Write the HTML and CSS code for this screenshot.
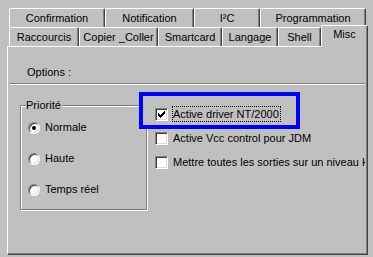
FILE: index.html
```html
<!DOCTYPE html>
<html>
<head>
<title>Options - Misc</title>
<link rel="stylesheet" href="styles.css">
</head>
<body>

  <div class="dialog">
    <div class="tab-row">
      <div class="tab tab-confirmation">Confirmation</div>
      <div class="tab tab-notification">Notification</div>
      <div class="tab tab-i2c">I²C</div>
      <div class="tab tab-programmation">Programmation</div>
    </div>
    <div class="tab-row">
      <div class="tab tab-raccourcis">Raccourcis</div>
      <div class="tab tab-copier">Copier _Coller</div>
      <div class="tab tab-smartcard">Smartcard</div>
      <div class="tab tab-langage">Langage</div>
      <div class="tab tab-shell">Shell</div>
      <div class="tab tab-misc active">Misc</div>
    </div>

    <div class="panel">
      <div class="section-title">Options :</div>
      <div class="etched-line"></div>

      <div class="options">
        <fieldset class="groupbox">
          <legend>Priorité</legend>
          <div class="radio-list">
            <label class="radio-row"><span class="radio checked"></span>Normale</label>
            <label class="radio-row"><span class="radio"></span>Haute</label>
            <label class="radio-row"><span class="radio"></span>Temps réel</label>
          </div>
        </fieldset>

        <div class="checks">
          <div class="highlight">
            <label class="check-row">
              <span class="checkbox">
                <svg width="11" height="11" viewBox="0 0 11 11" shape-rendering="crispEdges">
                  <path fill="#000" d="M8 2h1v1h-1z M7 3h2v1h-2z M2 4h1v1h-1z M6 4h3v1h-3z M2 5h2v1h-2z M5 5h3v1h-3z M2 6h5v1h-5z M3 7h3v1h-3z M4 8h1v1h-1z"/>
                </svg>
              </span>
              <span class="caption focused">Active driver NT/2000</span>
            </label>
          </div>
          <label class="check-row second">
            <span class="checkbox"></span>
            <span class="caption">Active Vcc control pour JDM</span>
          </label>
          <label class="check-row third">
            <span class="checkbox"></span>
            <span class="caption">Mettre toutes les sorties sur un niveau Haut</span>
          </label>
        </div>
      </div>
    </div>
  </div>

</body>
</html>
```

FILE: styles.css
```css
:root {
  --face: #c0c0c0;
  --light: #ffffff;
  --shadow: #808080;
  --dark: #404040;
  --mark-blue: #0000ff;
}

body {
  margin: 0;
  background-color: var(--face);
  font-family: "Liberation Sans", Arial, sans-serif;
  font-size: 11px;
  line-height: 13px;
  color: #000;
}

.dialog {
  padding: 8px 0 0 7px;
}

/* tab strip, two rows */
.tab-row {
  display: flex;
  align-items: flex-start;
  margin-left: 2px;
  height: 19px;
}

.tab {
  box-sizing: border-box;
  height: 19px;
  display: flex;
  align-items: center;
  justify-content: center;
  background-color: var(--face);
  border-top: 1px solid var(--light);
  border-left: 1px solid var(--light);
  border-right: 1px solid var(--dark);
  border-radius: 2px 2px 0 0;
  box-shadow: inset -1px 0 0 var(--shadow);
  white-space: nowrap;
}

.tab-confirmation { width: 96px; }
.tab-notification { width: 89px; }
.tab-i2c { width: 66px; }
.tab-programmation { width: 106px; }

.tab-raccourcis { width: 70px; }
.tab-copier { width: 79px; }
.tab-smartcard { width: 64px; }
.tab-langage { width: 56px; }
.tab-shell { width: 43px; }

.tab.active {
  position: relative;
  z-index: 2;
  width: 47px;
  height: 22px;
  margin-top: -2px;
  align-items: flex-start;
  padding-top: 2px;
}

/* page of the selected tab */
.panel {
  box-sizing: border-box;
  width: 361px;
  height: 209px;
  padding-right: 2px;
  border-top: 1px solid var(--light);
  border-left: 1px solid var(--light);
  border-right: 1px solid var(--dark);
  border-bottom: 1px solid var(--dark);
  box-shadow: inset -1px -1px 0 var(--shadow);
  overflow: hidden;
}

.section-title {
  padding: 19px 0 0 19px;
}

.etched-line {
  margin: 4px 0 0 2px;
  border-top: 1px solid var(--shadow);
  border-bottom: 1px solid var(--light);
}

.options {
  display: flex;
  align-items: flex-start;
  margin-top: 7px;
}

/* group box */
.groupbox {
  box-sizing: border-box;
  width: 127px;
  min-width: 0;
  height: 111px;
  margin: 7px 0 0 12px;
  padding: 0;
  border: 1px solid var(--shadow);
  box-shadow: inset 1px 1px 0 var(--light), 1px 1px 0 var(--light);
}

.groupbox legend {
  margin-left: 5px;
  padding: 0 1px 0 0;
  background-color: var(--face);
  line-height: 13px;
}

.radio-list {
  display: flex;
  flex-direction: column;
  gap: 18px;
  padding: 9px 0 0 7px;
}

.radio-row {
  display: flex;
  align-items: center;
  height: 13px;
}

.radio {
  box-sizing: border-box;
  position: relative;
  width: 12px;
  height: 12px;
  margin-right: 5px;
  border-radius: 50%;
  border: 1px solid;
  border-color: var(--shadow) var(--light) var(--light) var(--shadow);
  box-shadow: inset 1px 1px 0 var(--dark), inset -1px -1px 0 #dfdfdf;
  background-color: #fff;
}

.radio.checked::after {
  content: "";
  position: absolute;
  left: 3px;
  top: 3px;
  width: 4px;
  height: 4px;
  border-radius: 50%;
  background-color: #000;
}

/* check boxes */
.checks {
  flex: 1;
  min-width: 0;
  margin-left: -8px;
  white-space: nowrap;
  overflow: hidden;
}

.highlight {
  position: relative;
  z-index: 1;
  box-sizing: border-box;
  width: 161px;
  padding: 10px 0 3px 12px;
  border: 4px solid var(--mark-blue);
  background-color: var(--face);
}

.check-row {
  display: flex;
  align-items: center;
  height: 16px;
}

.check-row.second {
  margin-top: 1px;
  padding-left: 16px;
}

.check-row.third {
  margin-top: 8px;
  padding-left: 16px;
}

.checkbox {
  box-sizing: border-box;
  flex: none;
  width: 13px;
  height: 13px;
  margin-right: 4px;
  border: 1px solid;
  border-color: var(--shadow) var(--light) var(--light) var(--shadow);
  box-shadow: inset 1px 1px 0 var(--dark), inset -1px -1px 0 #dfdfdf;
  background-color: #fff;
}

.checkbox svg {
  display: block;
}

.caption {
  border: 1px dotted transparent;
  padding-right: 1px;
  line-height: 14px;
}

.caption.focused {
  border-color: #000;
}
```
